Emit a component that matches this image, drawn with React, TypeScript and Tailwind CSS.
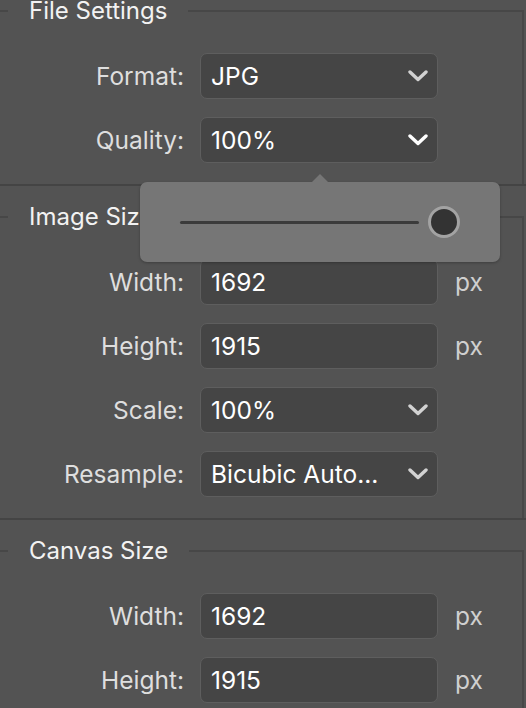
import React from 'react';

const font = { fontFamily: 'Inter, "Noto Sans", sans-serif' };

function Chevron({ bright }: { bright?: boolean }) {
  return (
    <svg width="20" height="12" viewBox="0 0 20 12" className="shrink-0">
      <polyline
        points="2,2 10,9.5 18,2"
        fill="none"
        stroke={bright ? '#ffffff' : '#d2d2d2'}
        strokeWidth="3.4"
        strokeLinecap="round"
        strokeLinejoin="round"
      />
    </svg>
  );
}

function Row({
  label,
  value,
  select,
  bright,
  unit,
}: {
  label: string;
  value: string;
  select?: boolean;
  bright?: boolean;
  unit?: string;
}) {
  return (
    <div className="flex items-center h-[46px]">
      <div className="w-[184px] text-right text-[24.5px] leading-[30px] text-[#dedede]">{label}</div>
      <div className="ml-[16px] w-[238px] h-[46px] flex items-center justify-between pl-[10px] pr-[9px] rounded-[7px] border border-[#5e5e5e] bg-[#454545]">
        <span className="text-[24.5px] leading-[30px] text-white">{value}</span>
        {select && <Chevron bright={bright} />}
      </div>
      {unit && <div className="ml-[17px] text-[24.5px] leading-[30px] text-[#cfcfcf]">{unit}</div>}
    </div>
  );
}

function Section({ title, children }: { title: string; children: React.ReactNode }) {
  return (
    <fieldset className="mr-[2px] border-t-2 border-r-2 border-l-0 border-b-0 border-[#474747] pb-[21px]">
      <legend className="ml-2 px-[21px] text-[24px] leading-[22px] text-[#f2f2f2]">{title}</legend>
      <div className="pt-[31px] flex flex-col gap-[18px]">{children}</div>
    </fieldset>
  );
}

export default function App() {
  return (
    <div className="relative w-[526px] h-[708px] overflow-hidden bg-[#535353]" style={font}>
      <Section title="File Settings">
        <Row label="Format:" value="JPG" select />
        <Row label="Quality:" value="100%" select bright />
      </Section>
      <div className="h-[2px] bg-[#444444]" />
      <div className="mt-[20px]">
        <Section title="Image Size">
          <Row label="Width:" value="1692" unit="px" />
          <Row label="Height:" value="1915" unit="px" />
          <Row label="Scale:" value="100%" select />
          <Row label="Resample:" value="Bicubic Auto..." select />
        </Section>
      </div>
      <div className="h-[2px] bg-[#444444]" />
      <div className="mt-[20px]">
        <Section title="Canvas Size">
          <Row label="Width:" value="1692" unit="px" />
          <Row label="Height:" value="1915" unit="px" />
        </Section>
      </div>

      {/* quality slider popover */}
      <div className="absolute left-[140px] top-[182px] w-[360px] h-[80px] rounded-[7px] bg-[#767676] shadow-[0_1px_3px_rgba(0,0,0,0.25)] flex items-center pl-[40px]">
        <div className="absolute left-[172px] -top-[8px] w-0 h-0 border-l-[8px] border-r-[8px] border-b-[8px] border-l-transparent border-r-transparent border-b-[#767676]" />
        <div className="w-[239px] h-[3px] rounded-full bg-[#3b3b3b]" />
        <div className="ml-[9px] w-[32px] h-[32px] rounded-full border-[3px] border-[#a3a3a3] bg-[#333333]" />
      </div>
    </div>
  );
}
